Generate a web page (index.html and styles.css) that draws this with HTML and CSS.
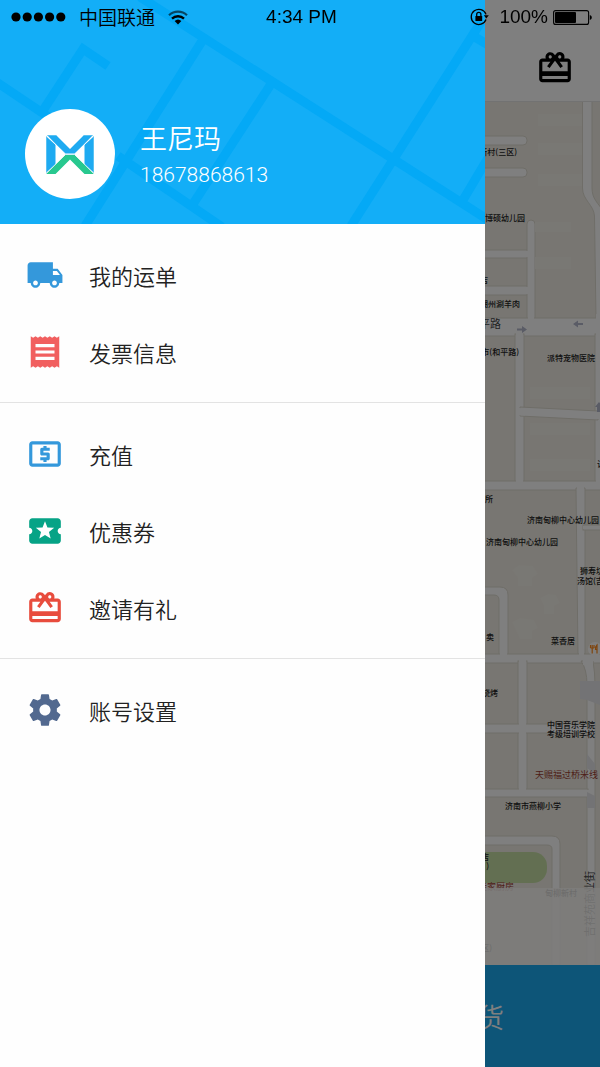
FILE: index.html
```html
<!DOCTYPE html>
<html lang="zh-CN">
<head>
    <meta charset="UTF-8">
    <meta name="viewport" content="width=device-width, initial-scale=1.0">
    <title>我的</title>
    <link rel="stylesheet" href="styles.css">
</head>
<body>

    <!-- Status Bar -->
    <div class="status-bar">
        <div class="status-left">
            <svg class="signal" width="55" height="10" viewBox="0 0 55 10">
                <circle cx="5" cy="5" r="4.6"/>
                <circle cx="16.2" cy="5" r="4.6"/>
                <circle cx="27.4" cy="5" r="4.6"/>
                <circle cx="38.6" cy="5" r="4.6"/>
                <circle cx="49.8" cy="5" r="4.6"/>
            </svg>
            <span class="carrier">中国联通</span>
            <svg class="wifi" width="20" height="15" viewBox="0 0 20 15">
                <path d="M1 5.2a13 13 0 0 1 18 0" fill="none" stroke="#000" stroke-opacity=".6" stroke-width="2.2"/>
                <path d="M4 8.6a8.8 8.8 0 0 1 12 0" fill="none" stroke="#000" stroke-width="2.4"/>
                <path d="M10 14.5l-3.4-3.4a5 5 0 0 1 6.8 0z"/>
            </svg>
        </div>
        <div class="time">4:34 PM</div>
        <div class="status-right">
            <svg width="19" height="18" viewBox="0 0 19 18">
                <path d="M16 11.500A7.600 7.600 0 1 1 16 6.400" fill="none" stroke="#000" stroke-width="1.3"/>
                <path d="M13.800 7.200h5l-2.500 3.300z"/>
                <rect x="5.4" y="8" width="6.8" height="5" rx=".6"/>
                <path d="M6.700 8.200V6.400a2.100 2.100 0 0 1 4.200 0v1.800" fill="none" stroke="#000" stroke-width="1.3"/>
            </svg>
            <span class="percent">100%</span>
            <svg width="39" height="15" viewBox="0 0 39 15">
                <rect x=".6" y=".6" width="35" height="13.8" rx="2" fill="none" stroke="#000" stroke-width="1.1"/>
                <rect x="2" y="2" width="21" height="11" rx="1"/>
                <path d="M36.800 5c1.400.4 2 1.300 2 2.500s-.6 2.100-2 2.500z"/>
            </svg>
        </div>
    </div>

    <!-- Home Screen -->
    <div class="home">
        <header class="top-bar">
            <button class="gift-button" aria-label="邀请有礼">
                <svg class="icon" viewBox="0 0 24 24"><path d="M20 6h-2.180c.11-.31.18-.65.18-1a2.996 2.996 0 0 0-5.500-1.650l-.5.67-.5-.68C10.960 2.540 10.050 2 9 2 7.340 2 6 3.340 6 5c0 .35.07.69.18 1H4c-1.110 0-1.990.89-1.990 2L2 19c0 1.110.89 2 2 2h16c1.110 0 2-.89 2-2V8c0-1.110-.89-2-2-2zm-5-2c.55 0 1 .45 1 1s-.45 1-1 1-1-.45-1-1 .45-1 1-1zM9 4c.55 0 1 .45 1 1s-.45 1-1 1-1-.45-1-1 .45-1 1-1zm11 15H4v-2h16v2zm0-5H4V8h5.080L7 10.830 8.620 12 11 8.760l1-1.360 1 1.360L15.380 12 17 10.830 14.920 8H20v6z"/></svg>
            </button>
        </header>

        <main class="map">
            <svg viewBox="0 102 600 863" preserveAspectRatio="xMaxYMin slice">
                <rect class="land" x="0" y="102" width="600" height="863"/>

                <!-- Roads -->
                <g class="road">
                    <rect x="400" y="136" width="127" height="9" rx="4"/>
                    <rect x="400" y="168" width="127" height="9" rx="4"/>
                    <path d="M582.500 100V188C582.500 200 594 205 594.500 216L596 318H604V212C598 203 592 199 592 188V100z"/>
                    <rect x="400" y="250" width="130" height="8"/>
                    <rect x="400" y="286" width="130" height="9"/>
                    <path d="M527 320V224q0-4 4-4t4 4V320z"/>
                    <rect x="400" y="318" width="210" height="18"/>
                    <rect x="515" y="334" width="9" height="150"/>
                    <rect x="595" y="334" width="10" height="150"/>
                    <path d="M520 407l78 4v9l-78-4z"/>
                    <rect x="400" y="481" width="210" height="9"/>
                    <path d="M576 488h9v166h-7z"/>
                    <rect x="583" y="525" width="20" height="5"/>
                    <path d="M400 587h100q8 0 8 8v62h-9v-57q0-5-5-5h-94z"/>
                    <rect x="400" y="654" width="210" height="9"/>
                    <rect x="518" y="661" width="9" height="130"/>
                    <path d="M581 661h12q2 12 2 24V965h-8V685q0-16-6-24z"/>
                    <rect x="400" y="724" width="188" height="9"/>
                    <rect x="400" y="789" width="188" height="8"/>
                    <path d="M400 836h152q8 0 8 8v121h-8V849q0-4-5-4H400z"/>
                </g>
                <!-- Cover the outlines where roads meet -->
                <path class="junction" d="M526 251h5v6h-5zM526 287h5v7h-5zM528 315h6v6h-6zM516 332h7v8h-7zM516 476h7v8h-7zM596 332h5v8h-5zM596 476h5v8h-5zM577 484h7v8h-7zM583 526h4v3h-4zM500 650h7v8h-7zM579 648h5v10h-5zM519 657h7v8h-7zM583 659h10v6h-10zM519 721h7v15h-7zM585 725h6v7h-6zM519 785h7v8h-7zM585 790h6v6h-6zM594 412h5v7h-5zM519 408l6 .4v7.200l-6-.4zM596 314h5v8h-5z"/>

                <!-- Buildings and park -->
                <g class="building">
                    <path d="M538 114h44v12h-44zM538 143h44v12h-44zM538 174h44v12h-44zM535 222h36v10h-36zM535 257h36v12h-36zM530 387h60v12h-60zM530 423h60v12h-60zM530 459h60v12h-60z"/>
                    <path d="M512 570l7-5 14 1 5 8-6 4v8h-14v-8zM540 598l8-4 8 1 4 8-6 3v8h-10v-8zM512 622l8-4 14 2 4 8-6 3v8h-12z"/>
                </g>
                <path class="shade" d="M580 681h20v24l-13-5-7-1zM587 754l8 10v10l-8-6zM587 792l8 4v12h-8z"/>
                <rect class="park" x="470" y="852" width="77" height="31" rx="14"/>

                <!-- Direction arrows -->
                <path class="arrow" d="M517 328.500h5v-2.500l5 3.500-5 3.500v-2.500h-5zM583 323h-5v-2.500l-5 3.500 5 3.500v-2.500h5zM597 412v-5h-2l4-5 4 5h-2v5z"/>

                <!-- Place names -->
                <g class="place">
                    <text class="end" x="517" y="155">新村(三区)</text>
                    <text class="end" x="525" y="221">博硕幼儿园</text>
                    <text class="end" x="488" y="283">店</text>
                    <text class="end" x="520" y="307">潮州涮羊肉</text>
                    <text class="end" x="519" y="355">市(和平路)</text>
                    <text x="547" y="361">派特宠物医院</text>
                    <text x="597" y="467">让</text>
                    <text class="end" x="493" y="502">所</text>
                    <text x="527" y="523">济南甸柳中心幼儿园</text>
                    <text x="486" y="545">济南甸柳中心幼儿园</text>
                    <text x="580" y="574">狮寿坊</text>
                    <text x="577" y="584">汤馆(吉</text>
                    <text class="end" x="494" y="640">卖</text>
                    <text x="551" y="644">菜香居</text>
                    <text class="end" x="498" y="696">烧烤</text>
                    <text x="547" y="728">中国音乐学院</text>
                    <text x="547" y="737">考级培训学校</text>
                    <text x="505" y="809">济南市燕柳小学</text>
                    <text class="end" x="489" y="860">店</text>
                    <text class="end" x="489" y="869">)</text>
                    <text x="545" y="896">甸柳新村</text>
                    <text class="end" x="492" y="951">区)</text>
                </g>
                <text class="street end" x="501" y="328">和平路</text>
                <text class="street" transform="translate(594 937) rotate(-90)">吉祥苑商业街</text>
                <text class="food" x="535" y="778">天赐福过桥米线</text>
                <text class="food end" x="514" y="890">佳家厨房</text>

                <circle cx="595" cy="649" r="7" fill="#fff"/>
                <path d="M590.500 645v3M592.200 645v8.500M594 645v3M590.500 648h3.500M597 653.500V645q-2 2-1.500 4.500h1.500" fill="none" stroke="#ff8a1c" stroke-width="1.2"/>

                <rect class="haze" x="0" y="888" width="600" height="77"/>
            </svg>
        </main>

        <footer class="actions">
            <button class="ship-button">我要发货</button>
        </footer>
    </div>

    <!-- Side Drawer -->
    <div class="backdrop">
        <aside class="drawer">
            <div class="profile">
                <svg class="streets" viewBox="0 0 485 224" preserveAspectRatio="xMinYMin slice">
                    <path d="M140-3L490 221M204 38L85 226M271 84L193 204M118 156L222 227M481 22L351 226M473 36l17 10M488 158L463 200M-5 81L50 118M42 112L83 49L108 66"/>
                </svg>
                <div class="avatar">
                    <svg width="48" height="39" viewBox="0 0 48 39">
                        <path fill="#1eaaf1" d="M0 1l9.500 8.500v20L0 38zM48 1l-9.500 8.500v20L48 38zM1 0h9l14 14L38 0h9L29 18.500H19z"/>
                        <path fill="#28c88f" d="M19 20h10l19 19h-9.500L24 24.500 9.500 39H0z"/>
                        <path fill="none" stroke="#fff" stroke-width=".8" d="M0 .5l19.500 18.500M48 .5L28.500 19M0 38.500L19 20M48 38.500L29 20"/>
                        <path fill="none" stroke="#9bdcf5" stroke-width=".6" d="M.3 1v37M47.700 1v37M1 .3h9M38 .3h9M19 19.300h10"/>
                    </svg>
                </div>
                <div class="user">
                    <h1>王尼玛</h1>
                    <p>18678868613</p>
                </div>
            </div>

            <nav class="menu">
                <div class="menu-group">
                    <a href="#">
                        <svg class="icon blue" viewBox="0 0 24 24"><path d="M20 8h-3V4H3c-1.100 0-2 .9-2 2v11h2c0 1.660 1.340 3 3 3s3-1.340 3-3h6c0 1.660 1.340 3 3 3s3-1.340 3-3h2v-5l-3-4zM6 18.500c-.83 0-1.500-.67-1.500-1.500s.67-1.500 1.500-1.500 1.500.67 1.500 1.500-.67 1.500-1.500 1.500zm13.500-9l1.960 2.500H17V9.500h2.500zm-1.500 9c-.83 0-1.500-.67-1.500-1.500s.67-1.500 1.500-1.500 1.500.67 1.500 1.500-.67 1.500-1.500 1.500z"/></svg>
                        <span>我的运单</span>
                    </a>
                    <a href="#">
                        <svg class="icon pink" viewBox="0 0 24 24"><path d="M18 17H6v-2h12v2zm0-4H6v-2h12v2zm0-4H6V7h12v2zM3 22l1.500-1L6 22l1.500-1L9 22l1.500-1L12 22l1.500-1L15 22l1.500-1L18 22l1.500-1L21 22V2l-1.500 1L18 2l-1.500 1L15 2l-1.500 1L12 2l-1.500 1L9 2 7.500 3 6 2 4.500 3 3 2v20z"/></svg>
                        <span>发票信息</span>
                    </a>
                </div>
                <div class="menu-group">
                    <a href="#">
                        <svg class="icon blue" viewBox="0 0 24 24"><path d="M11 17h2v-1h1c.55 0 1-.45 1-1v-3c0-.55-.45-1-1-1h-3v-1h4V8h-2V7h-2v1h-1c-.55 0-1 .45-1 1v3c0 .55.45 1 1 1h3v1H9v2h2v1zm9-13H4c-1.110 0-1.990.89-1.990 2L2 18c0 1.110.89 2 2 2h16c1.110 0 2-.89 2-2V6c0-1.110-.89-2-2-2zm0 14H4V6h16v12z"/></svg>
                        <span>充值</span>
                    </a>
                    <a href="#">
                        <svg class="icon green" viewBox="0 0 24 24"><path d="M20 12c0-1.100.9-2 2-2V6c0-1.100-.9-2-2-2H4c-1.100 0-1.990.9-1.990 2v4c1.100 0 1.990.9 1.990 2s-.89 2-2 2v4c0 1.100.9 2 2 2h16c1.100 0 2-.9 2-2v-4c-1.100 0-2-.9-2-2zm-4.420 4.800L12 14.500l-3.580 2.300 1.080-4.120-3.290-2.690 4.240-.25L12 5.800l1.540 3.950 4.240.25-3.290 2.690 1.090 4.110z"/></svg>
                        <span>优惠券</span>
                    </a>
                    <a href="#">
                        <svg class="icon red" viewBox="0 0 24 24"><path d="M20 6h-2.180c.11-.31.18-.65.18-1a2.996 2.996 0 0 0-5.500-1.650l-.5.67-.5-.68C10.960 2.540 10.050 2 9 2 7.340 2 6 3.340 6 5c0 .35.07.69.18 1H4c-1.110 0-1.990.89-1.990 2L2 19c0 1.110.89 2 2 2h16c1.110 0 2-.89 2-2V8c0-1.110-.89-2-2-2zm-5-2c.55 0 1 .45 1 1s-.45 1-1 1-1-.45-1-1 .45-1 1-1zM9 4c.55 0 1 .45 1 1s-.45 1-1 1-1-.45-1-1 .45-1 1-1zm11 15H4v-2h16v2zm0-5H4V8h5.080L7 10.830 8.620 12 11 8.760l1-1.360 1 1.360L15.380 12 17 10.830 14.920 8H20v6z"/></svg>
                        <span>邀请有礼</span>
                    </a>
                </div>
                <div class="menu-group">
                    <a href="#">
                        <svg class="icon slate" viewBox="0 0 24 24"><path d="M19.430 12.980c.04-.32.07-.64.07-.98s-.03-.66-.07-.98l2.110-1.650c.19-.15.24-.42.12-.64l-2-3.460c-.12-.22-.39-.3-.61-.22l-2.490 1c-.52-.4-1.080-.73-1.690-.98l-.38-2.650C14.460 2.180 14.250 2 14 2h-4c-.25 0-.46.18-.49.42l-.38 2.650c-.61.25-1.170.59-1.690.98l-2.490-1c-.23-.09-.49 0-.61.22l-2 3.460c-.13.22-.07.49.12.64l2.110 1.650c-.04.32-.07.65-.07.98s.03.66.07.98l-2.110 1.650c-.19.15-.24.42-.12.64l2 3.460c.12.22.39.3.61.22l2.490-1c.52.4 1.080.73 1.690.98l.38 2.650c.03.24.24.42.49.42h4c.25 0 .46-.18.49-.42l.38-2.650c.61-.25 1.170-.59 1.690-.98l2.490 1c.23.09.49 0 .61-.22l2-3.460c.12-.22.07-.49-.12-.64l-2.110-1.650zM12 15.500c-1.930 0-3.500-1.570-3.500-3.500s1.570-3.500 3.500-3.500 3.500 1.570 3.500 3.500-1.570 3.500-3.500 3.500z"/></svg>
                        <span>账号设置</span>
                    </a>
                </div>
            </nav>
        </aside>
    </div>

</body>
</html>
```
FILE: styles.css
```css
* {
    box-sizing: border-box;
}

body {
    margin: 0;
    font-family: "Noto Sans CJK SC", sans-serif;
    font-weight: 350;
    background: #fff;
    overflow: hidden;
}

button {
    border: none;
    padding: 0;
    background: none;
    font-family: inherit;
    font-weight: 350;
    cursor: pointer;
}

svg {
    display: block;
}

.icon {
    width: 38px;
    height: 38px;
    fill: currentColor;
}

/* Status bar, stays above the drawer */
.status-bar {
    position: fixed;
    top: 0;
    left: 0;
    right: 0;
    z-index: 3;
    display: grid;
    grid-template-columns: 1fr auto 1fr;
    align-items: center;
    height: 32px;
    padding: 0 8px 0 11px;
    font-size: 19px;
    line-height: 32px;
    color: #000;
}

.status-left,
.status-right {
    display: flex;
    align-items: center;
}

.status-right {
    justify-content: flex-end;
}

.time,
.percent {
    font-family: "Liberation Sans", sans-serif;
    line-height: 34px;
}

.carrier {
    margin: 0 13px;
}

.percent {
    margin: 0 5px 0 10px;
}

/* Home screen */
.home {
    display: flex;
    flex-direction: column;
    height: 100vh;
}

.top-bar {
    display: flex;
    justify-content: flex-end;
    align-items: flex-end;
    height: 102px;
    padding: 0 26px 14px;
    border-bottom: 1px solid #e4e4e4;
    color: #222;
}

.map {
    flex: 1;
    min-height: 0;
}

.map svg {
    width: 100%;
    height: 100%;
}

.actions {
    display: grid;
    grid-template-columns: 1fr 1fr;
    height: 102px;
    background: #1aaaf0;
}

.ship-button {
    grid-column: 2;
    font-size: 27px;
    color: #fff;
}

/* Map */
.land {
    fill: #f0ede4;
}

.road {
    fill: #fff;
    stroke: #dedbd0;
    stroke-width: 1;
}

.junction {
    fill: #fff;
}

.building {
    fill: #f3f0e8;
}

.shade {
    fill: #e6e6ea;
}

.park {
    fill: #c6dfa5;
}

.arrow {
    fill: #b4b8cc;
}

.place {
    font-size: 8px;
    font-weight: 500;
    fill: #222;
}

.street {
    font-size: 11px;
    font-weight: 400;
    fill: #444;
}

.food {
    font-size: 9px;
    font-weight: 400;
    fill: #9c3c30;
}

.end {
    text-anchor: end;
}

.haze {
    fill: #fbfaf8;
    opacity: 0.85;
}

/* Drawer */
.backdrop {
    position: fixed;
    inset: 0;
    z-index: 2;
    background: rgba(0, 0, 0, 0.5);
}

.drawer {
    width: calc(100% - 115px);
    height: 100%;
    background: #fefefe;
    overflow-y: auto;
}

.profile {
    position: relative;
    display: flex;
    align-items: flex-end;
    gap: 25px;
    height: 224px;
    padding: 0 25px 25px;
    background: #13aef7;
    color: #fff;
}

/* Street pattern behind the profile */
.streets {
    position: absolute;
    top: 0;
    left: 0;
    width: 100%;
    height: 100%;
    fill: none;
    stroke: #04a9f6;
    stroke-width: 9;
}

.avatar {
    position: relative;
    display: flex;
    justify-content: center;
    align-items: center;
    width: 90px;
    height: 90px;
    border-radius: 50%;
    background: #fff;
}

.user {
    position: relative;
    padding-bottom: 6px;
}

.user h1 {
    margin: 0;
    font-size: 27px;
    font-weight: 350;
    line-height: 38px;
}

.user p {
    margin: 0;
    font-family: Roboto, "Liberation Sans", sans-serif;
    font-size: 21px;
    font-weight: 300;
    line-height: 36px;
}

.menu-group {
    padding: 12px 0;
    border-bottom: 1px solid #e3e3e3;
}

.menu-group:last-child {
    border-bottom: none;
}

.menu-group a {
    display: flex;
    align-items: center;
    gap: 25px;
    height: 77px;
    padding: 0 26px;
    font-size: 22px;
    color: #222;
    text-decoration: none;
}

.blue {
    color: #3498db;
}

.pink {
    color: #f15f5f;
}

.green {
    color: #06a386;
}

.red {
    color: #e84c3d;
}

.slate {
    color: #52698f;
}
```
